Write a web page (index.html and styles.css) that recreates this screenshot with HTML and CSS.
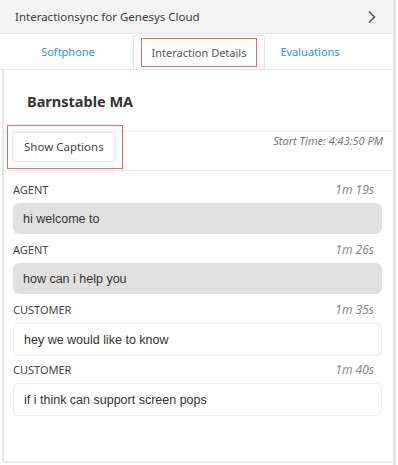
FILE: index.html
```html
<!DOCTYPE html>
<html lang="en">

<head>
  <meta charset="UTF-8">
  <meta name="viewport" content="width=device-width, initial-scale=1.0">
  <title>Interactionsync</title>
  <link rel="stylesheet" href="styles.css">
</head>

<body>
  <div class="app">
    <div class="header">
      <span>Interactionsync for Genesys Cloud</span>
      <svg class="chevron" width="10" height="14" viewBox="0 0 10 14">
        <path d="M2 1.5 L7.5 7 L2 12.5" fill="none" stroke="#555" stroke-width="1.6" />
      </svg>
    </div>
    <div class="tabs">
      <div class="tab">Softphone</div>
      <div class="tab active"><span class="mark">Interaction Details</span></div>
      <div class="tab tab-last">Evaluations</div>
    </div>
    <div class="panel">
      <h2 class="title">Barnstable MA</h2>
      <div class="toolbar">
        <div class="mark mark-btn">
          <button class="btn">Show Captions</button>
        </div>
        <span class="start-time">Start Time: 4:43:50 PM</span>
      </div>
      <div class="transcript">
        <div class="line-head"><span>AGENT</span><span class="time">1m 19s</span></div>
        <div class="bubble agent">hi welcome to</div>
        <div class="line-head"><span>AGENT</span><span class="time">1m 26s</span></div>
        <div class="bubble agent">how can i help you</div>
        <div class="line-head"><span>CUSTOMER</span><span class="time">1m 35s</span></div>
        <div class="bubble customer">hey we would like to know</div>
        <div class="line-head"><span>CUSTOMER</span><span class="time">1m 40s</span></div>
        <div class="bubble customer">if i think can support screen pops</div>
      </div>
    </div>
  </div>
</body>

</html>
```

FILE: styles.css
```css
body {
  margin: 0;
  font-family: "Noto Sans", "Open Sans", sans-serif;
  color: #333;
  background: #fff;
}

.app {
  width: 393px;
  height: 465px;
  border-right: 3px solid #e6e6e6;
  background: #fff;
  overflow: hidden;
}

.header {
  height: 33px;
  background: #f3f3f3;
  display: flex;
  align-items: center;
  justify-content: space-between;
  padding: 0 16px 0 15px;
  font-size: 11.5px;
  color: #3a3a3a;
  border-bottom: 1px solid #e8e8e8;
}

.tabs {
  display: flex;
  height: 35px;
  border-bottom: 1px solid #e6e6e6;
  padding-left: 3px;
}

.tab {
  width: 130px;
  display: flex;
  align-items: center;
  justify-content: center;
  font-size: 11px;
  color: #2f8ff5;
}

.tab-last {
  width: 90px;
}

.tab.active {
  color: #555;
  border: 1px solid #e4e4e4;
  border-bottom: none;
  border-radius: 3px 3px 0 0;
  margin-top: 1px;
}

.mark {
  border: 1.5px solid #e8676b;
}

.tab .mark {
  padding: 6px 10px;
}

.panel {
  margin-left: 2px;
  border-left: 2px solid #e6e6e6;
  height: 391px;
  border-bottom: 2px solid #eee;
}

.title {
  margin: 0;
  height: 61px;
  box-sizing: border-box;
  font-size: 14.5px;
  font-weight: 700;
  padding: 21px 0 0 23px;
  color: #333;
}

.toolbar {
  display: flex;
  justify-content: space-between;
  align-items: flex-start;
  border-top: 1px solid #efefef;
  border-bottom: 1px solid #e8e8e8;
  padding: 0 10px 0 3px;
  height: 38px;
}

.mark-btn {
  padding: 6px 6px 6px 4px;
  margin-top: -7px;
}

.btn {
  display: block;
  font-family: "Noto Sans", "Open Sans", sans-serif;
  font-size: 11.5px;
  color: #444;
  background: #fff;
  border: 1px solid #e6e6e6;
  border-radius: 3px;
  padding: 4px 11px 6px;
  height: 30px;
}

.start-time {
  font-size: 11px;
  font-style: italic;
  color: #777;
  margin-top: 1px;
}

.transcript {
  padding: 10px 11px 0 9px;
}

.line-head {
  display: flex;
  justify-content: space-between;
  font-size: 11px;
  color: #444;
  padding: 0 8px 0 0;
  height: 16px;
  align-items: center;
  margin-bottom: 6px;
}

.time {
  font-style: italic;
  color: #888;
  font-size: 12px;
}

.bubble {
  font-family: "Liberation Sans", Arial, sans-serif;
  font-size: 12.5px;
  color: #333;
  border-radius: 6px;
  padding: 0 10px;
  height: 31px;
  box-sizing: border-box;
  display: flex;
  align-items: center;
  margin-bottom: 7px;
}

.bubble.agent {
  background: #e0e0e0;
}

.bubble.customer {
  background: #fff;
  border: 1px solid #ececec;
  height: 33px;
  margin-bottom: 5px;
}
```
